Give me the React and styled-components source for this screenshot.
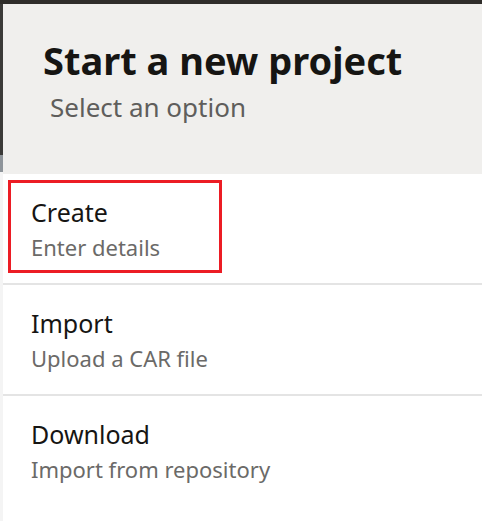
import React from "react";
import styled, { createGlobalStyle } from "styled-components";

const GlobalStyle = createGlobalStyle`
  html, body {
    margin: 0;
    padding: 0;
    background: #ffffff;
  }
  body {
    font-family: "Noto Sans", "Open Sans", sans-serif;
  }
`;

const Frame = styled.div`
  width: 482px;
  height: 521px;
  overflow: hidden;
  border-top: 4px solid #2f2d2a;
  box-sizing: border-box;
  display: flex;
`;

const Gutter = styled.div`
  width: 3px;
  flex-shrink: 0;
  display: flex;
  flex-direction: column;
`;

const GutterTop = styled.div`
  height: 151px;
  background: #3b3a38;
`;

const GutterMid = styled.div`
  height: 17px;
  background: #8e949a;
`;

const GutterRest = styled.div`
  flex: 1;
  background: #f4f4f4;
`;

const Panel = styled.div`
  flex: 1;
  display: flex;
  flex-direction: column;
  background: #ffffff;
`;

const Header = styled.header`
  height: 170px;
  flex-shrink: 0;
  box-sizing: border-box;
  background: #f0efed;
  padding: 32px 0 0 40px;
`;

const Title = styled.h1`
  margin: 0;
  font-size: 38px;
  line-height: 48px;
  font-weight: 700;
  color: #161513;
`;

const Subtitle = styled.p`
  margin: 7px 0 0 7px;
  font-size: 26px;
  line-height: 32px;
  color: #5f5e5c;
`;

const List = styled.div`
  display: flex;
  flex-direction: column;
`;

const Option = styled.div`
  height: 111px;
  flex-shrink: 0;
  box-sizing: border-box;
  padding: 6px 0 0 5px;
  border-bottom: 2px solid #e4e4e4;
  &:last-child {
    border-bottom: none;
  }
`;

const OptionBody = styled.div`
  width: 214px;
  height: 93px;
  box-sizing: border-box;
  padding: 13px 0 0 20px;
  white-space: nowrap;
  border: 3px solid ${(p) => (p.selected ? "#ec1c24" : "transparent")};
`;

const OptionTitle = styled.div`
  font-size: 25px;
  line-height: 32px;
  color: #161513;
`;

const OptionText = styled.div`
  margin-top: 4px;
  font-size: 22px;
  line-height: 30px;
  color: #6b6a68;
`;

const options = [
  { title: "Create", text: "Enter details", selected: true },
  { title: "Import", text: "Upload a CAR file" },
  { title: "Download", text: "Import from repository" },
];

export default function App() {
  return (
    <>
      <GlobalStyle />
      <Frame>
        <Gutter>
          <GutterTop />
          <GutterMid />
          <GutterRest />
        </Gutter>
        <Panel>
          <Header>
            <Title>Start a new project</Title>
            <Subtitle>Select an option</Subtitle>
          </Header>
          <List>
            {options.map((o) => (
              <Option key={o.title}>
                <OptionBody selected={o.selected}>
                  <OptionTitle>{o.title}</OptionTitle>
                  <OptionText>{o.text}</OptionText>
                </OptionBody>
              </Option>
            ))}
          </List>
        </Panel>
      </Frame>
    </>
  );
}
